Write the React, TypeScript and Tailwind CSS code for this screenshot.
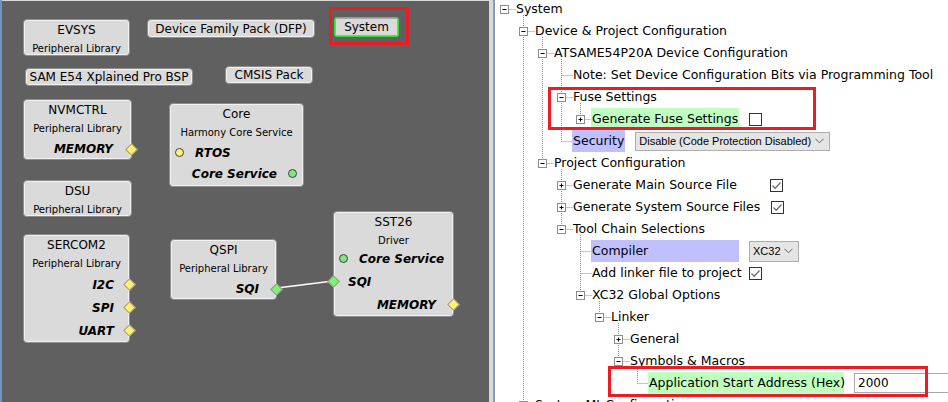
import React from 'react';

type Port = {
  label: string;
  align: 'left' | 'right';
  pad: number;
  conn: 'yd-right' | 'gd-right' | 'gd-left' | 'yc-left' | 'gc-right' | 'gc-left';
  off?: number;
};

type NodeDef = {
  title: string;
  sub?: string;
  left: number;
  top: number;
  w: number;
  h: number;
  rowH?: number;
  portsMt?: number;
  ports?: Port[];
};

const nodes: NodeDef[] = [
  { title: 'EVSYS', sub: 'Peripheral Library', left: 23, top: 19, w: 107, h: 37 },
  {
    title: 'NVMCTRL', sub: 'Peripheral Library', left: 23, top: 99, w: 109, h: 61, rowH: 22,
    ports: [{ label: 'MEMORY', align: 'right', pad: 18, conn: 'yd-right' }],
  },
  {
    title: 'Core', sub: 'Harmony Core Service', left: 169, top: 103, w: 135, h: 84, rowH: 21,
    ports: [
      { label: 'RTOS', align: 'left', pad: 25, conn: 'yc-left', off: 5 },
      { label: 'Core Service', align: 'right', pad: 26, conn: 'gc-right', off: 6 },
    ],
  },
  { title: 'DSU', sub: 'Peripheral Library', left: 23, top: 180, w: 109, h: 37 },
  {
    title: 'SERCOM2', sub: 'Peripheral Library', left: 23, top: 234, w: 107, h: 109, rowH: 23,
    ports: [
      { label: 'I2C', align: 'right', pad: 15, conn: 'yd-right' },
      { label: 'SPI', align: 'right', pad: 15, conn: 'yd-right' },
      { label: 'UART', align: 'right', pad: 15, conn: 'yd-right' },
    ],
  },
  {
    title: 'QSPI', sub: 'Peripheral Library', left: 170, top: 239, w: 107, h: 61, rowH: 22,
    ports: [{ label: 'SQI', align: 'right', pad: 17, conn: 'gd-right' }],
  },
  {
    title: 'SST26', sub: 'Driver', left: 333, top: 211, w: 121, h: 106, rowH: 23, portsMt: -3,
    ports: [
      { label: 'Core Service', align: 'left', pad: 25, conn: 'gc-left', off: 5 },
      { label: 'SQI', align: 'left', pad: 14, conn: 'gd-left' },
      { label: 'MEMORY', align: 'right', pad: 17, conn: 'yd-right' },
    ],
  },
];

const pills = [
  { label: 'Device Family Pack (DFP)', left: 147, top: 19, w: 168, h: 19 },
  { label: 'SAM E54 Xplained Pro BSP', left: 25, top: 68, w: 168, h: 18 },
  { label: 'CMSIS Pack', left: 225, top: 66, w: 88, h: 18 },
];

const Connector = ({ conn, off = 0 }: { conn: Port['conn']; off?: number }) => {
  if (conn === 'yd-right' || conn === 'gd-right' || conn === 'gd-left') {
    const color = conn === 'yd-right' ? 'bg-[#fff07c]' : 'bg-[#7ef07e]';
    const side = conn === 'gd-left' ? 'left-[-5px]' : 'right-[-5px]';
    return (
      <span className={`absolute top-1/2 ${side} w-[9px] h-[9px] -mt-[4.5px] rotate-45 border border-[#9a9a6a] ${color}`} />
    );
  }
  const color = conn === 'yc-left' ? 'bg-[#fff07c]' : 'bg-[#7ee87e]';
  const style = conn === 'gc-right' ? { right: off } : { left: off };
  return (
    <span
      className={`absolute top-1/2 w-[9px] h-[9px] -mt-[4.5px] rounded-full border border-[#404040] ${color}`}
      style={style}
    />
  );
};

const Node = ({ n }: { n: NodeDef }) => (
  <div
    className="absolute rounded-[4px] border border-[#8d8d8d] bg-[#dadada] shadow-[inset_0_0_0_1px_#f2f2f2] text-black"
    style={{ left: n.left, top: n.top, width: n.w, height: n.h }}
  >
    <div className="pt-[1px] flex flex-col items-center">
      <div className="h-[18px] leading-[18px] text-[12px]">{n.title}</div>
      {n.sub && <div className="h-[19px] leading-[19px] text-[10px]">{n.sub}</div>}
    </div>
    {n.ports && (
      <div className="flex flex-col" style={{ marginTop: n.portsMt ?? 0 }}>
        {n.ports.map((p) => (
          <div
            key={p.label}
            className={`relative flex items-center ${p.align === 'right' ? 'justify-end' : 'justify-start'}`}
            style={{
              height: n.rowH,
              paddingRight: p.align === 'right' ? p.pad : 0,
              paddingLeft: p.align === 'left' ? p.pad : 0,
            }}
          >
            <span className="text-[12px] font-bold italic">{p.label}</span>
            <Connector conn={p.conn} off={p.off} />
          </div>
        ))}
      </div>
    )}
  </div>
);

const Canvas = () => (
  <div className="relative w-[489px] shrink-0 h-full bg-[#606060] border-l-[2px] border-[#6f96be] overflow-hidden font-['DejaVu_Sans',sans-serif]">
    <div className="h-[1px] bg-[#d8d8d8]" />
    {pills.map((p) => (
      <div
        key={p.label}
        className="absolute flex items-center justify-center rounded-[4px] border border-[#8d8d8d] bg-[#dadada] shadow-[inset_0_0_0_1px_#f2f2f2] text-[12px] text-black"
        style={{ left: p.left - 2, top: p.top, width: p.w, height: p.h }}
      >
        {p.label}
      </div>
    ))}
    <div className="absolute left-[327px] top-[7px] w-[80px] h-[38px] border-[3px] border-[#ec1c24]" />
    <div className="absolute left-[332px] top-[17px] w-[65px] h-[20px] flex items-center justify-center rounded-[3px] border border-[#2ee02e] bg-[#dadada] shadow-[inset_0_0_0_1px_#a8a8a8] text-[12px] text-black">
      System
    </div>
    <svg className="absolute left-0 top-0" width="489" height="402">
      <line x1="275" y1="288" x2="331" y2="281" stroke="#ffffff" strokeWidth="1.4" />
    </svg>
    {nodes.map((n) => (
      <Node key={n.title} n={{ ...n, left: n.left - 2 }} />
    ))}
  </div>
);

type Row = {
  label: string;
  level: number;
  kind: 'open' | 'closed' | 'leaf';
  hl?: 'green' | 'blue';
  lw?: number;
  extra?: React.ReactNode;
};

const Check = ({ on }: { on?: boolean }) => (
  <span className="shrink-0 w-[13px] h-[13px] border border-[#333333] bg-white flex items-center justify-center">
    {on && (
      <svg width="11" height="11" viewBox="0 0 11 11">
        <path d="M1.5 5.5 L4.2 8.2 L9.5 2.5" fill="none" stroke="#707070" strokeWidth="1.3" />
      </svg>
    )}
  </span>
);

const Combo = ({ text, w, h }: { text: string; w: number; h: number }) => (
  <span
    className="shrink-0 flex items-center justify-between pl-[3px] pr-[5px] border border-[#adadad] bg-[#e5e5e5] font-['Liberation_Sans',sans-serif] text-[11px] whitespace-nowrap overflow-hidden"
    style={{ width: w, height: h }}
  >
    <span>{text}</span>
    <svg width="9" height="6" viewBox="0 0 9 6" className="shrink-0">
      <path d="M0.5 0.8 L4.5 4.8 L8.5 0.8" fill="none" stroke="#606060" strokeWidth="1" />
    </svg>
  </span>
);

const rows: Row[] = [
  { label: 'System', level: 0, kind: 'open' },
  { label: 'Device & Project Configuration', level: 1, kind: 'open' },
  { label: 'ATSAME54P20A Device Configuration', level: 2, kind: 'open' },
  { label: 'Note: Set Device Configuration Bits via Programming Tool', level: 3, kind: 'leaf' },
  { label: 'Fuse Settings', level: 3, kind: 'open' },
  { label: 'Generate Fuse Settings', level: 4, kind: 'closed', hl: 'green', extra: <Check /> },
  { label: 'Security', level: 3, kind: 'leaf', hl: 'blue', extra: <Combo text="Disable (Code Protection Disabled)" w={195} h={19} /> },
  { label: 'Project Configuration', level: 2, kind: 'open' },
  { label: 'Generate Main Source File', level: 3, kind: 'closed', lw: 188, extra: <Check on /> },
  { label: 'Generate System Source Files', level: 3, kind: 'closed', lw: 189, extra: <Check on /> },
  { label: 'Tool Chain Selections', level: 3, kind: 'open' },
  { label: 'Compiler', level: 4, kind: 'leaf', hl: 'blue', lw: 148, extra: <Combo text="XC32" w={50} h={21} /> },
  { label: 'Add linker file to project', level: 4, kind: 'leaf', lw: 148, extra: <Check on /> },
  { label: 'XC32 Global Options', level: 4, kind: 'open' },
  { label: 'Linker', level: 5, kind: 'open' },
  { label: 'General', level: 6, kind: 'closed' },
  { label: 'Symbols & Macros', level: 6, kind: 'open' },
  {
    label: 'Application Start Address (Hex)', level: 7, kind: 'leaf', hl: 'green', lw: 196,
    extra: (
      <span className="shrink-0 w-[110px] h-[20px] flex items-center pl-[3px] bg-white border border-[#a9a9a9] text-[12px]">2000</span>
    ),
  },
  { label: 'System Mt Configuration', level: 1, kind: 'closed' },
];

const ROW_H = 22;
const cy = (i: number) => 9 + i * ROW_H;
const cx = (lvl: number) => 9 + lvl * 19;

const TreeLines = () => {
  const parts: React.ReactNode[] = [];
  rows.forEach((r, i) => {
    const x = cx(r.level) + 0.5;
    const y = cy(i) + 0.5;
    parts.push(
      <line key={`h${i}`} x1={x} y1={y} x2={x + 11} y2={y} stroke="#8f8f8f" strokeDasharray="1 1" />
    );
    if (r.kind === 'open') {
      let last = -1;
      for (let k = i + 1; k < rows.length && rows[k].level > r.level; k++) {
        if (rows[k].level === r.level + 1) last = k;
      }
      if (last > 0) {
        const vx = cx(r.level + 1) + 0.5;
        parts.push(
          <line key={`v${i}`} x1={vx} y1={cy(i) + 6} x2={vx} y2={cy(last) + 0.5} stroke="#8f8f8f" strokeDasharray="1 1" />
        );
      }
    }
  });
  rows.forEach((r, i) => {
    if (r.kind === 'leaf') return;
    const bx = cx(r.level) - 4 + 0.5;
    const by = cy(i) - 4 + 0.5;
    parts.push(
      <g key={`b${i}`}>
        <rect x={bx} y={by} width="8" height="8" fill="#ffffff" stroke="#8c8c8c" />
        <line x1={bx + 2} y1={cy(i) + 0.5} x2={bx + 6} y2={cy(i) + 0.5} stroke="#000000" />
        {r.kind === 'closed' && (
          <line x1={cx(r.level) + 0.5} y1={by + 2} x2={cx(r.level) + 0.5} y2={by + 6} stroke="#000000" />
        )}
      </g>
    );
  });
  return (
    <svg className="absolute left-0 top-0 pointer-events-none" width="453" height="420">
      {parts}
    </svg>
  );
};

const Tree = () => (
  <div className="relative flex-1 h-full bg-white overflow-hidden font-['DejaVu_Sans',sans-serif] text-[12.5px] text-black">
    <TreeLines />
    <div className="relative flex flex-col -mt-[2px]">
      {rows.map((r) => (
        <div key={r.label} className="h-[22px] flex items-center gap-[10px]" style={{ paddingLeft: 20 + r.level * 19 }}>
          <span
            className={`shrink-0 h-full flex items-center px-[1px] whitespace-nowrap ${
              r.hl === 'green' ? 'bg-[#c0ffc0]' : r.hl === 'blue' ? 'bg-[#c0c0ff]' : ''
            }`}
            style={r.lw ? { width: r.lw } : undefined}
          >
            {r.label}
          </span>
          {r.extra}
        </div>
      ))}
    </div>
    <div className="absolute left-[53px] top-[87px] w-[268px] h-[43px] border-[3px] border-[#ec1c24]" />
    <div className="absolute left-[113px] top-[366px] w-[320px] h-[31px] border-[3px] border-[#ec1c24]" />
  </div>
);

export default function App() {
  return (
    <div className="w-[948px] h-[402px] flex overflow-hidden">
      <Canvas />
      <div className="w-[4px] shrink-0 h-full bg-[#d9d9d9]" />
      <div className="w-[2px] shrink-0 h-full bg-[#819fc6]" />
      <Tree />
    </div>
  );
}
